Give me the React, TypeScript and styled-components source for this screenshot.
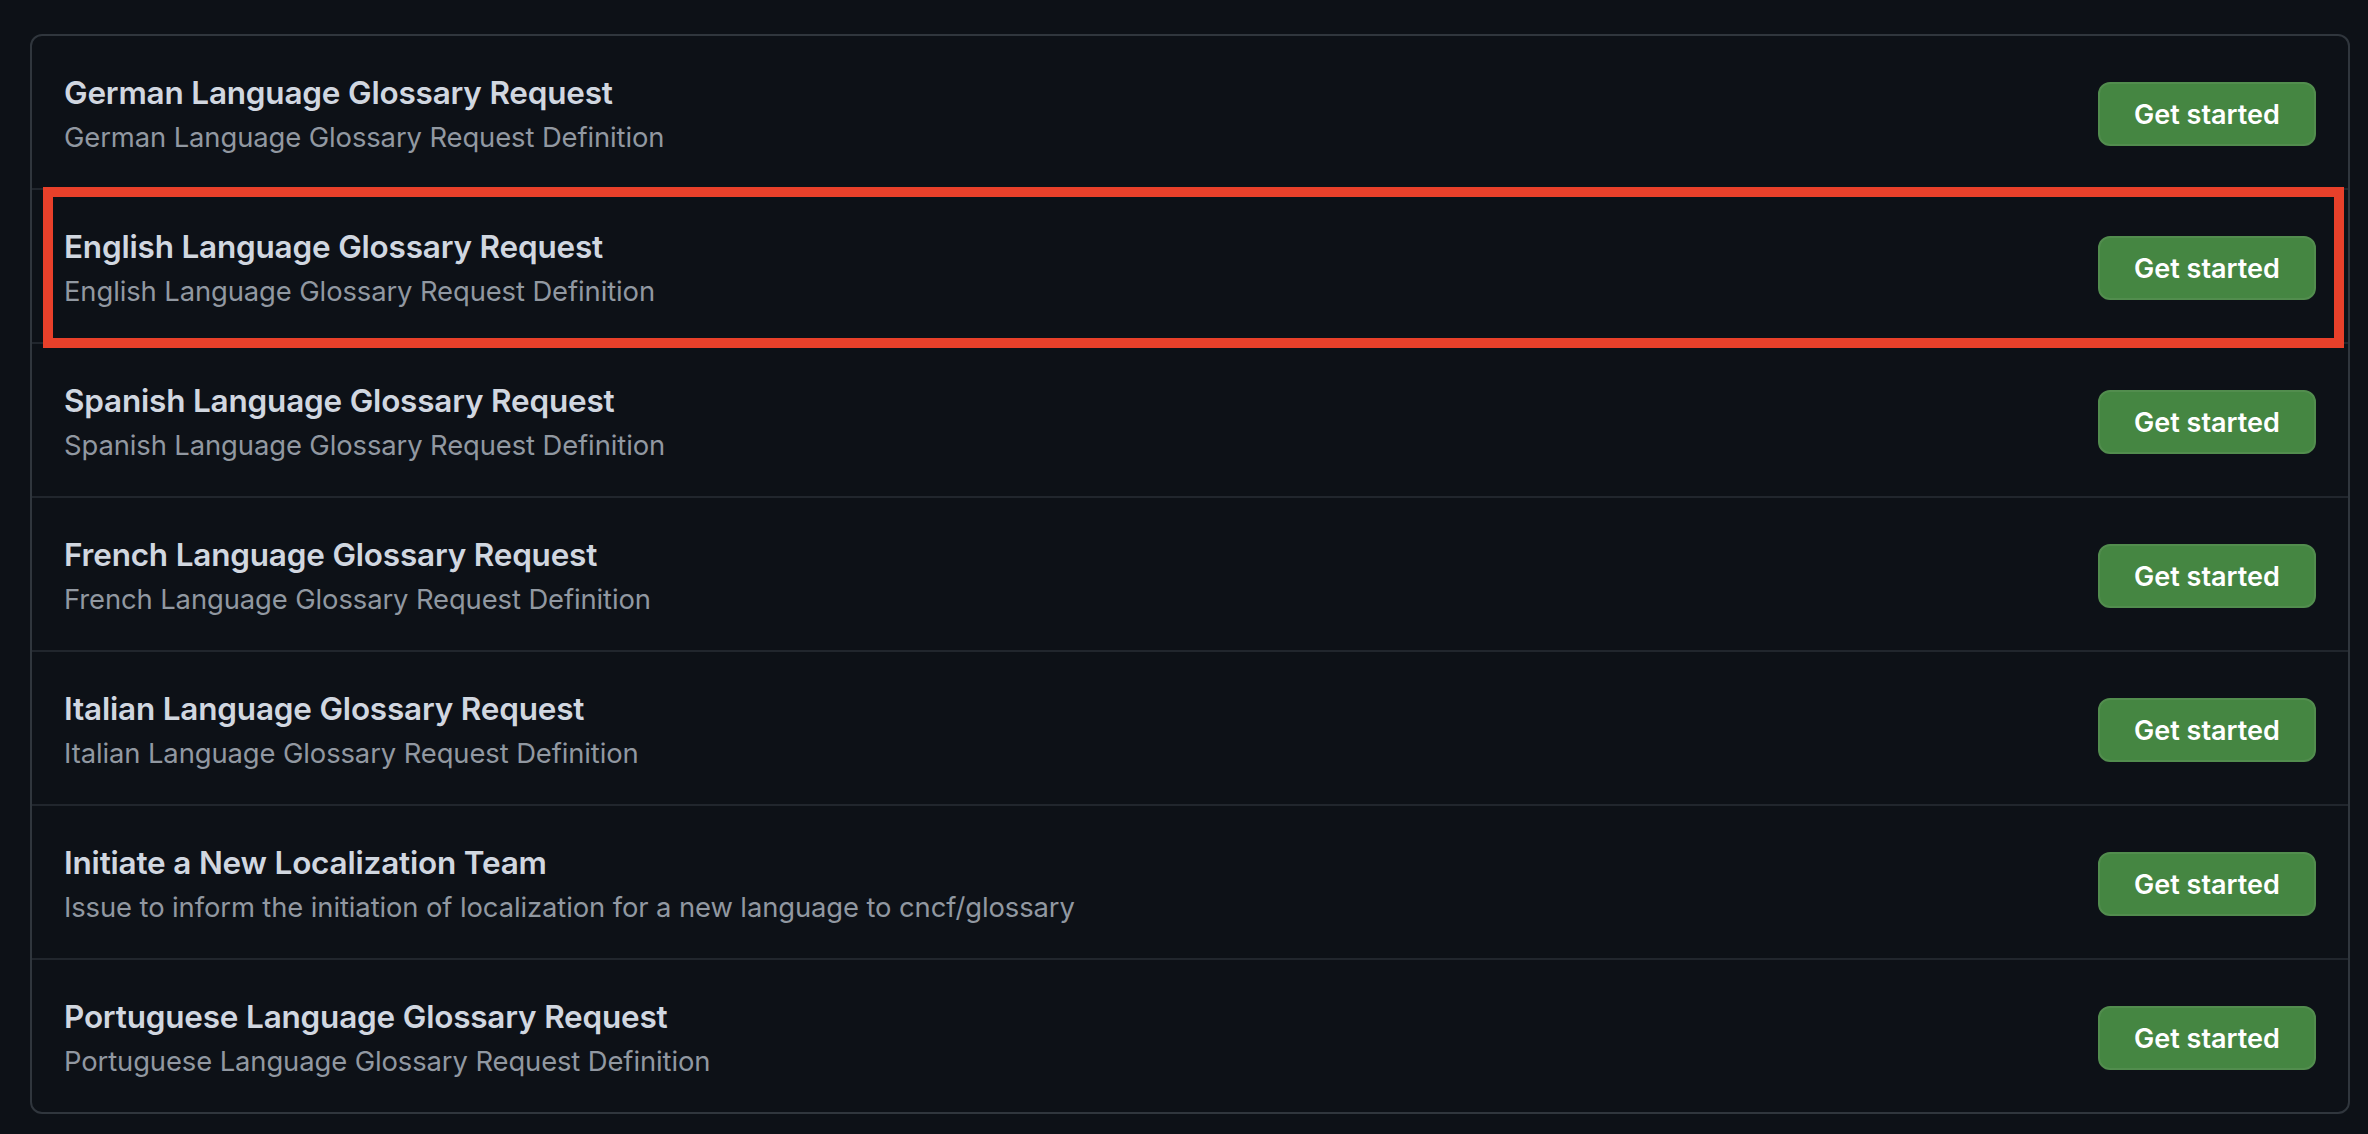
import React from "react";
import styled, { createGlobalStyle } from "styled-components";

const GlobalStyle = createGlobalStyle`
  html, body {
    margin: 0;
    padding: 0;
    background: #0d1117;
  }
  body {
    font-family: Inter, "Noto Sans", "Liberation Sans", sans-serif;
    -webkit-font-smoothing: antialiased;
  }
`;

const Page = styled.div`
  padding: 34px 18px 20px 30px;
  min-height: 1134px;
  box-sizing: border-box;
  background: #0d1117;
`;

const Box = styled.div`
  border: 2px solid #30363d;
  border-radius: 12px;
  background: #0d1117;
  overflow: visible;
`;

const Row = styled.div<{ $first?: boolean }>`
  position: relative;
  display: flex;
  align-items: center;
  justify-content: space-between;
  padding: 32px 32px 30px 32px;
  border-top: ${(p) => (p.$first ? "none" : "2px solid #21262d")};
`;

const Text = styled.div`
  display: flex;
  flex-direction: column;
`;

const Title = styled.div`
  font-size: 31.5px;
  line-height: 49px;
  font-weight: 600;
  color: #d1d7e0;
  letter-spacing: -0.2px;
`;

const Desc = styled.div`
  font-size: 27.4px;
  line-height: 41px;
  font-weight: 400;
  color: #9198a1;
  letter-spacing: -0.1px;
`;

const Button = styled.button`
  box-sizing: border-box;
  width: 218px;
  height: 64px;
  margin-top: 2px;
  border-radius: 12px;
  border: 2px solid #528d4e;
  background: #458642;
  color: #ffffff;
  font-family: Inter, "Noto Sans", "Liberation Sans", sans-serif;
  font-size: 27px;
  font-weight: 600;
  cursor: pointer;
  display: flex;
  align-items: center;
  justify-content: center;
  flex-shrink: 0;
`;

const Highlight = styled.div`
  position: absolute;
  z-index: 2;
  left: 11px;
  right: 4px;
  top: -3px;
  bottom: -6px;
  border: 10px solid #e8402a;
  pointer-events: none;
`;

const items = [
  { title: "German Language Glossary Request", desc: "German Language Glossary Request Definition" },
  { title: "English Language Glossary Request", desc: "English Language Glossary Request Definition", highlight: true },
  { title: "Spanish Language Glossary Request", desc: "Spanish Language Glossary Request Definition" },
  { title: "French Language Glossary Request", desc: "French Language Glossary Request Definition" },
  { title: "Italian Language Glossary Request", desc: "Italian Language Glossary Request Definition" },
  { title: "Initiate a New Localization Team", desc: "Issue to inform the initiation of localization for a new language to cncf/glossary" },
  { title: "Portuguese Language Glossary Request", desc: "Portuguese Language Glossary Request Definition" },
];

export default function App() {
  return (
    <>
      <GlobalStyle />
      <Page>
        <Box>
          {items.map((it, i) => (
            <Row key={it.title} $first={i === 0}>
              <Text>
                <Title>{it.title}</Title>
                <Desc>{it.desc}</Desc>
              </Text>
              <Button>Get started</Button>
              {it.highlight && <Highlight />}
            </Row>
          ))}
        </Box>
      </Page>
    </>
  );
}
